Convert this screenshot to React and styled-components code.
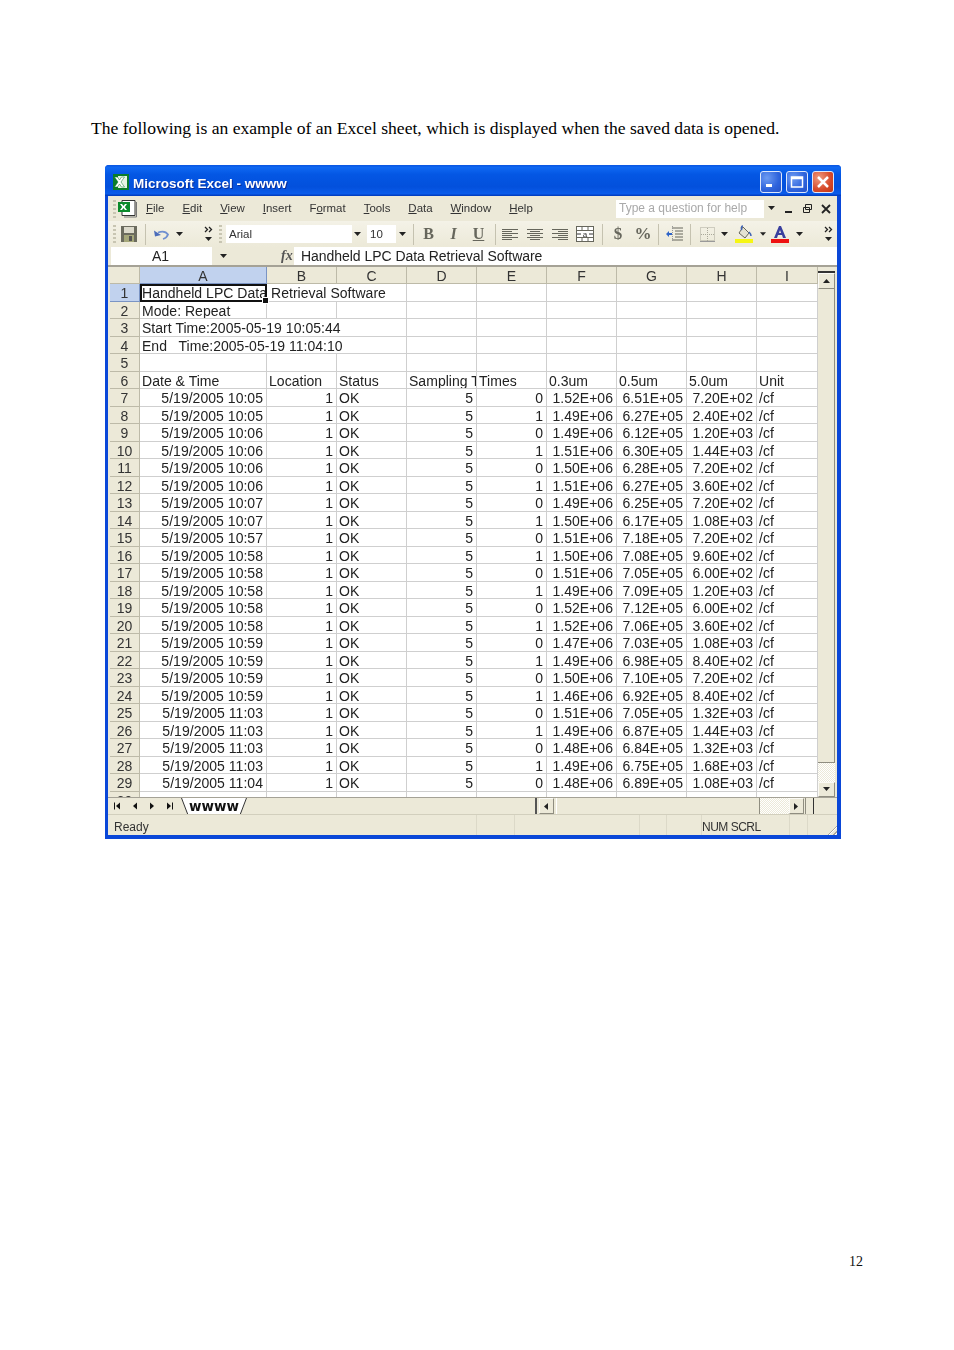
import styled, { createGlobalStyle } from 'styled-components';

const GlobalStyle = createGlobalStyle`
  html, body { margin: 0; padding: 0; background: #fff; }
`;

const Page = styled.div`
  width: 954px;
  height: 1350px;
  box-sizing: border-box;
  padding: 118px 91px 0;
  overflow: hidden;
`;

const Intro = styled.p`
  margin: 0;
  font: 17.6px/20px "Liberation Serif", serif;
  color: #000;
  white-space: nowrap;
`;

const PageNumber = styled.div`
  margin-top: 413px;
  text-align: right;
  font: 14px/20px "Liberation Serif", serif;
  color: #111;
`;

const Window = styled.div`
  width: 736px;
  height: 674px;
  margin: 27px 0 0 14px;
  box-sizing: border-box;
  display: flex;
  flex-direction: column;
  padding: 0 4px 4px 3px;
  background: #0a47d8;
  border-radius: 4px 4px 0 0;
  font-family: "Liberation Sans", Arial, sans-serif;
  color: #222;
  filter: blur(0.45px);
`;

const TitleBar = styled.div`
  height: 31px;
  flex: none;
  box-sizing: border-box;
  margin: 0 -4px 0 -3px;
  padding: 3px 7px 0 8px;
  display: flex;
  align-items: center;
  gap: 4px;
  border-radius: 4px 4px 0 0;
  background: linear-gradient(#0a55e0 0, #0f68f2 8%, #0457e4 30%, #0350dc 70%, #0a5bea 92%, #0038b8 100%);
`;

const TitleText = styled.span`
  flex: 1;
  margin-top: 2px;
  font: bold 13.5px "Liberation Sans", sans-serif;
  color: #fff;
  text-shadow: 1px 1px 0 #0b2f9c;
`;

const WinButton = styled.div`
  width: 22px;
  height: 22px;
  box-sizing: border-box;
  border: 1px solid #dfe8fb;
  border-radius: 3px;
  background: ${(p) => (p.$close
    ? 'radial-gradient(circle at 30% 30%, #ee9b80, #d6492a 60%, #c23512)'
    : 'radial-gradient(circle at 30% 30%, #6d9bf2, #2e63dc 60%, #2552c8)')};
  display: flex;
  align-items: center;
  justify-content: center;
`;

const MenuRow = styled.div`
  height: 25px;
  flex: none;
  padding: 0 6px 0 5px;
  display: flex;
  align-items: center;
  background: #ece9d8;
`;

const Grip = styled.div`
  width: 3px;
  height: 18px;
  flex: none;
  margin-right: ${(p) => p.$mr || 2}px;
  background: repeating-linear-gradient(#c8c5b2 0 2px, transparent 2px 4px);
`;

const MenuItems = styled.div`
  margin: -2px 0 0 8px;
  display: flex;
  gap: 18px;
  flex: 1;
  font-size: 11.45px;
  color: #333;
  u { text-decoration-thickness: 1px; text-underline-offset: 1px; }
`;

const HelpBox = styled.div`
  width: 162px;
  height: 18px;
  padding-left: 3px;
  box-sizing: border-box;
  display: flex;
  align-items: center;
  justify-content: space-between;
  background: #fff;
  font-size: 12px;
  color: #a9a9a9;
  margin-right: 6px;
`;

const HelpLabel = styled.span`
  margin-top: -2px;
`;

const HelpArrow = styled.div`
  width: 14px;
  height: 18px;
  background: #ece9d8;
  display: flex;
  align-items: center;
  justify-content: center;
`;

const DocControls = styled.div`
  width: 47px;
  display: flex;
  align-items: center;
  justify-content: space-between;
`;

const ToolRow = styled.div`
  height: 26px;
  flex: none;
  padding: 0 4px 0 5px;
  display: flex;
  align-items: center;
  background: linear-gradient(#f4f2e7, #ece9d8);
`;

const ToolSlot = styled.div`
  width: ${(p) => p.$w}px;
  box-sizing: border-box;
  padding-left: ${(p) => p.$pl || 0}px;
  margin-right: ${(p) => p.$mr || 0}px;
  flex: none;
  display: flex;
  align-items: center;
  justify-content: center;
`;

const TextTool = styled(ToolSlot)`
  font: bold ${(p) => p.$size || 16}px "Liberation Serif", serif;
  font-style: ${(p) => (p.$italic ? 'italic' : 'normal')};
  text-decoration: ${(p) => (p.$under ? 'underline' : 'none')};
  color: #66665c;
`;

const Sep = styled.div`
  width: 1px;
  height: 21px;
  margin: 0 ${(p) => p.$r}px 0 ${(p) => p.$l}px;
  flex: none;
  background: #c5c2b0;
`;

const FieldBox = styled.div`
  width: ${(p) => p.$w}px;
  height: 18px;
  flex: none;
  box-sizing: border-box;
  padding-left: 3px;
  background: #fff;
  font-size: 11.5px;
  line-height: 18px;
  color: #333;
`;

const FormulaRow = styled.div`
  height: 18px;
  flex: none;
  display: flex;
  align-items: stretch;
  background: #ece9d8;
  font-size: 14px;
  line-height: 18px;
`;

const NameBox = styled.div`
  width: 101px;
  margin-left: 3px;
  padding-right: 43px;
  box-sizing: border-box;
  background: #fff;
  text-align: right;
`;

const NameArrow = styled.div`
  width: 22px;
  display: flex;
  align-items: center;
  justify-content: center;
`;

const FxLabel = styled.div`
  width: 60px;
  box-sizing: border-box;
  padding-left: 47px;
  font: italic bold 14px/18px "Liberation Serif", serif;
  color: #555;
`;

const FormulaValue = styled.div`
  flex: 1;
  padding-left: 7px;
  background: #fff;
  letter-spacing: -0.04px;
`;

const SheetArea = styled.div`
  display: flex;
  height: 530px;
  flex: none;
  padding-left: 2px;
  background: #ece9d8;
  border-top: 2px solid #a5a296;
  overflow: hidden;
`;

const Grid = styled.div`
  width: 708px;
  flex: none;
  display: grid;
  grid-template-columns: 30px 127px repeat(7, 70px) 61px;
  grid-template-rows: 17px repeat(29, 17.5px) 6px;
  background: #fff;
  font-size: 14px;
  line-height: 18px;
  letter-spacing: 0.03px;
  overflow: hidden;
`;

const HeadCell = styled.div`
  box-sizing: border-box;
  overflow: hidden;
  text-align: center;
  background: ${(p) => (p.$active ? '#c1d2ee' : '#ece9d8')};
  border-right: 1px solid ${(p) => (p.$active ? '#7a94c4' : '#bdbaa8')};
  border-bottom: 1px solid ${(p) => (p.$active ? '#7a94c4' : '#bdbaa8')};
  color: #333;
`;

const Cell = styled.div`
  position: relative;
  box-sizing: border-box;
  padding: 0 3px 0 ${(p) => p.$pl || 2}px;
  grid-column: span ${(p) => p.$span || 1};
  text-align: ${(p) => p.$align || 'left'};
  white-space: pre;
  overflow: hidden;
  border-right: 1px solid #cfcfcf;
  border-bottom: 1px solid #cfcfcf;
`;

const SelectedCell = styled(Cell)`
  overflow: visible;
  border: 2px solid #111;
  padding: 0;
  line-height: 14px;
  z-index: 1;
  &::after {
    content: '';
    position: absolute;
    right: -4px;
    bottom: -4px;
    width: 5px;
    height: 5px;
    background: #111;
    border: 1px solid #fff;
  }
`;

const Clipped = styled.div`
  overflow: hidden;
`;

const VScroll = styled.div`
  width: 17px;
  flex: none;
  display: flex;
  flex-direction: column;
  background: repeating-conic-gradient(#ece9d8 0 25%, #fff 0 50%) 0 0 / 2px 2px;
`;

const SplitBar = styled.div`
  height: 4px;
  background: #ece9d8;
  border-bottom: 2px solid #333;
  flex: none;
`;

const ScrollBtn = styled.div`
  height: ${(p) => p.$h || 17}px;
  flex: none;
  box-sizing: border-box;
  display: flex;
  align-items: center;
  justify-content: center;
  background: #ece9d8;
  border: 1px solid #fbfaf5;
  border-right-color: #8f8d80;
  border-bottom-color: #8f8d80;
`;

const VThumb = styled.div`
  height: 474px;
  flex: none;
  box-sizing: border-box;
  background: #ece9d8;
  border-bottom: 1px solid #8f8d80;
  border-right: 1px solid #8f8d80;
`;

const VGap = styled.div`
  flex: 1;
`;

const TabRow = styled.div`
  height: 16px;
  flex: none;
  display: flex;
  align-items: stretch;
  background: #ece9d8;
  padding-left: 2px;
  border-top: 1px solid #a5a296;
`;

const TabNav = styled.div`
  width: 71px;
  padding-right: 4px;
  box-sizing: border-box;
  display: flex;
  align-items: center;
  justify-content: space-around;
  flex: none;
`;

const SheetTab = styled.div`
  position: relative;
  z-index: 0;
  width: 66px;
  flex: none;
  text-align: center;
  font: bold 13.5px/17px "DejaVu Sans", sans-serif;
  color: #111;
`;

const TabEdge = styled.svg`
  position: absolute;
  inset: 0;
  z-index: -1;
`;

const HSplit = styled.div`
  width: 2px;
  flex: none;
  margin: 0 2px 0 288px;
  background: #555;
`;

const HBtn = styled(ScrollBtn)`
  width: 15px;
  height: 16px;
`;

const HThumb = styled.div`
  width: 204px;
  flex: none;
  margin-left: 2px;
  box-sizing: border-box;
  background: #ece9d8;
  border-right: 1px solid #8f8d80;
  border-left: 1px solid #fff;
`;

const HGap = styled.div`
  width: 29px;
  flex: none;
  background: repeating-conic-gradient(#ece9d8 0 25%, #fff 0 50%) 0 0 / 2px 2px;
`;

const HEnd = styled.div`
  width: 7px;
  flex: none;
  margin-left: 1px;
  border-left: 1px solid #8f8d80;
  border-right: 1px solid #333;
`;

const StatusBar = styled.div`
  height: 20px;
  flex: none;
  display: flex;
  align-items: stretch;
  background: #ece9d8;
  border-top: 1px solid #d2cfbd;
  font-size: 12px;
  line-height: 25px;
  color: #333;
  position: relative;
`;

const StatusPane = styled.div`
  width: ${(p) => p.$w}px;
  flex: none;
  box-sizing: border-box;
  padding-left: ${(p) => p.$pl || 0}px;
  border-right: 1px solid #dcd9c8;
  letter-spacing: ${(p) => p.$ls || 0}px;
  white-space: nowrap;
`;

const ResizeGrip = styled.div`
  position: absolute;
  right: 0;
  bottom: 0;
  width: 12px;
  height: 12px;
  background: repeating-linear-gradient(135deg, transparent 0 2px, #aaa69a 2px 3px, #fff 3px 4px);
  clip-path: polygon(100% 0, 100% 100%, 0 100%);
`;

const Tri = ({ dir = 'down', size = 7, color = '#222' }) => {
  const pts = {
    down: '0,1 7,1 3.5,5',
    up: '0,5 7,5 3.5,1',
    left: '5,0 5,7 1,3.5',
    right: '1,0 1,7 5,3.5',
  }[dir];
  return (
    <svg width={size} height={size} viewBox="0 0 7 7">
      <polygon points={pts} fill={color} />
    </svg>
  );
};

const ExcelLogo = ({ size = 16 }) => (
  <svg width={size} height={size} viewBox="0 0 16 16">
    <rect x="0" y="0" width="16" height="16" fill="#0b7d2a" />
    <rect x="5" y="2" width="9" height="12" fill="#e7f3e5" />
    <path d="M1.500 3h3l2 3 2-3h3L8 8l3.500 5h-3l-2-3-2 3h-3L5 8z" fill="#fff" stroke="#0b7d2a" strokeWidth="0.500" />
  </svg>
);

const DocIcon = () => (
  <svg width="20" height="18" viewBox="0 0 20 18">
    <path d="M4 0.500h13v15H4z" fill="#fff" stroke="#333" />
    <path d="M18.500 2v15H6" fill="none" stroke="#777" />
    <rect x="0" y="2" width="12" height="10" fill="#0b8a2a" />
    <path d="M2 4h2l1.500 2L7 4h2L6.800 7 9 10H7L5.500 8 4 10H2l2.200-3z" fill="#fff" />
  </svg>
);

const SaveIcon = () => (
  <svg width="16" height="16" viewBox="0 0 16 16">
    <path d="M0 0h16v16H0z" fill="#6b6b5e" />
    <rect x="3" y="1" width="10" height="6" fill="#dcdacb" />
    <rect x="3" y="9" width="10" height="7" fill="#a5a77a" />
    <rect x="8" y="10" width="3" height="5" fill="#555" />
  </svg>
);

const UndoIcon = () => (
  <svg width="15" height="11" viewBox="0 0 15 11">
    <path d="M4 3.500c4-1.500 8-1 10 2-1 3-3 4-5 4.500" fill="none" stroke="#6f8fd0" strokeWidth="1.800" />
    <path d="M0 1.500l1 6 6-1.500z" fill="#4b6dba" />
  </svg>
);

const Chevrons = () => (
  <svg width="9" height="16" viewBox="0 0 9 16">
    <path d="M1 1l2.500 2.500L1 6M5 1l2.500 2.500L5 6" fill="none" stroke="#222" strokeWidth="1.300" />
    <polygon points="1,11 8,11 4.500,15" fill="#222" />
  </svg>
);

const AlignIcon = ({ mode }) => {
  const widths = [16, 10, 16, 10, 16, 10];
  const x = (w) => (mode === 'left' ? 0 : mode === 'center' ? (16 - w) / 2 : 16 - w);
  return (
    <svg width="16" height="13" viewBox="0 0 16 13">
      {widths.map((w, i) => (
        <rect key={i} x={x(w)} y={i * 2 + 1} width={w} height="1" fill="#66665c" />
      ))}
    </svg>
  );
};

const MergeIcon = () => (
  <svg width="18" height="16" viewBox="0 0 18 16">
    <rect x="0.500" y="0.500" width="17" height="15" fill="#fff" stroke="#66665c" />
    <path d="M0 4.500h18M0 11.500h18M6 0v4M12 0v4M6 12v4M12 12v4" stroke="#66665c" />
    <path d="M1 8h4M17 8h-4" stroke="#333" />
    <text x="9" y="10.500" fontSize="8" textAnchor="middle" fill="#333" fontFamily="Liberation Sans">a</text>
  </svg>
);

const IndentIcon = () => (
  <svg width="18" height="16" viewBox="0 0 18 16">
    <path d="M6 2h11M9 5h8M9 8h8M9 11h8M6 14h11" stroke="#66665c" />
    <path d="M6.500 0v16" stroke="#999" strokeDasharray="1 1" />
    <path d="M0 8l3-3v2h3v2H3v2z" fill="#2f64c8" />
  </svg>
);

const BorderIcon = () => (
  <svg width="15" height="15" viewBox="0 0 15 15">
    <rect x="0.500" y="0.500" width="14" height="13" fill="none" stroke="#aaa89a" strokeDasharray="1 1" />
    <path d="M7.500 1v13M1 7.500h13" stroke="#aaa89a" strokeDasharray="1 1" />
    <path d="M0 14.500h15" stroke="#999" />
  </svg>
);

const FillIcon = () => (
  <svg width="18" height="18" viewBox="0 0 18 18">
    <path d="M8 2l6 6-4 5-6-5z" fill="#e4e2d2" stroke="#66665c" />
    <path d="M8 1c-2 0-2 3-1 4" fill="none" stroke="#3f63b4" strokeWidth="1.500" />
    <path d="M14 7c1 1 2 2 2 4" fill="none" stroke="#3f63b4" strokeWidth="1.500" />
    <rect x="0" y="14" width="18" height="4" fill="#f6f614" />
  </svg>
);

const FontColorIcon = () => (
  <svg width="18" height="18" viewBox="0 0 18 18">
    <path d="M3 13L8 1h2l5 12h-3l-1-3H7l-1 3zM8 8h2L9 5z" fill="#3a3f9e" />
    <rect x="0" y="14" width="18" height="4" fill="#ee1111" />
  </svg>
);

const GLYPH = {
  min: <rect x="3" y="10" width="6" height="3" fill="#fff" />,
  max: <path d="M2.500 3h11v10h-11z M2.500 4.500h11" fill="none" stroke="#fff" strokeWidth="1.500" />,
  close: <path d="M3 3l10 10M13 3L3 13" stroke="#fff" strokeWidth="2.500" />,
};

const WinGlyph = ({ name }) => (
  <svg width="16" height="16" viewBox="0 0 16 16">{GLYPH[name]}</svg>
);

const TabNavIcon = ({ dir, bar }) => (
  <svg width="8" height="8" viewBox="0 0 8 8">
    <polygon points={dir === 'left' ? '6,0.500 6,7.500 2,4' : '2,0.500 2,7.500 6,4'} fill="#111" />
    {bar && <rect x={dir === 'left' ? 0 : 7} y="0.500" width="1" height="7" fill="#111" />}
  </svg>
);

const COLS = ['A', 'B', 'C', 'D', 'E', 'F', 'G', 'H', 'I'];

// time, e, f, g, h
const DATA = [
  ['10:05', 0, '1.52E+06', '6.51E+05', '7.20E+02'],
  ['10:05', 1, '1.49E+06', '6.27E+05', '2.40E+02'],
  ['10:06', 0, '1.49E+06', '6.12E+05', '1.20E+03'],
  ['10:06', 1, '1.51E+06', '6.30E+05', '1.44E+03'],
  ['10:06', 0, '1.50E+06', '6.28E+05', '7.20E+02'],
  ['10:06', 1, '1.51E+06', '6.27E+05', '3.60E+02'],
  ['10:07', 0, '1.49E+06', '6.25E+05', '7.20E+02'],
  ['10:07', 1, '1.50E+06', '6.17E+05', '1.08E+03'],
  ['10:57', 0, '1.51E+06', '7.18E+05', '7.20E+02'],
  ['10:58', 1, '1.50E+06', '7.08E+05', '9.60E+02'],
  ['10:58', 0, '1.51E+06', '7.05E+05', '6.00E+02'],
  ['10:58', 1, '1.49E+06', '7.09E+05', '1.20E+03'],
  ['10:58', 0, '1.52E+06', '7.12E+05', '6.00E+02'],
  ['10:58', 1, '1.52E+06', '7.06E+05', '3.60E+02'],
  ['10:59', 0, '1.47E+06', '7.03E+05', '1.08E+03'],
  ['10:59', 1, '1.49E+06', '6.98E+05', '8.40E+02'],
  ['10:59', 0, '1.50E+06', '7.10E+05', '7.20E+02'],
  ['10:59', 1, '1.46E+06', '6.92E+05', '8.40E+02'],
  ['11:03', 0, '1.51E+06', '7.05E+05', '1.32E+03'],
  ['11:03', 1, '1.49E+06', '6.87E+05', '1.44E+03'],
  ['11:03', 0, '1.48E+06', '6.84E+05', '1.32E+03'],
  ['11:03', 1, '1.49E+06', '6.75E+05', '1.68E+03'],
  ['11:04', 0, '1.48E+06', '6.89E+05', '1.08E+03'],
];

const blanks = (n) => Array.from({ length: n }, (_, i) => <Cell key={`b${i}`} />);

const Row = ({ n, d }) => (
  <>
    <HeadCell>{n}</HeadCell>
    <Cell $align="right">5/19/2005 {d[0]}</Cell>
    <Cell $align="right">1</Cell>
    <Cell>OK</Cell>
    <Cell $align="right">5</Cell>
    <Cell $align="right">{d[1]}</Cell>
    <Cell $align="right">{d[2]}</Cell>
    <Cell $align="right">{d[3]}</Cell>
    <Cell $align="right">{d[4]}</Cell>
    <Cell>/cf</Cell>
  </>
);

function SheetGrid() {
  return (
    <Grid>
      <HeadCell />
      {COLS.map((c) => <HeadCell key={c} $active={c === 'A'}>{c}</HeadCell>)}

      <HeadCell $active>1</HeadCell>
      <SelectedCell><Clipped>Handheld LPC Data</Clipped></SelectedCell>
      <Cell $span={2} $pl={4}>Retrieval Software</Cell>
      {blanks(6)}

      <HeadCell>2</HeadCell>
      <Cell>Mode: Repeat</Cell>
      {blanks(8)}

      <HeadCell>3</HeadCell>
      <Cell $span={3}>Start Time:2005-05-19 10:05:44</Cell>
      {blanks(6)}

      <HeadCell>4</HeadCell>
      <Cell $span={3}>End   Time:2005-05-19 11:04:10</Cell>
      {blanks(6)}

      <HeadCell>5</HeadCell>
      {blanks(9)}

      <HeadCell>6</HeadCell>
      <Cell>Date &amp; Time</Cell>
      <Cell>Location</Cell>
      <Cell>Status</Cell>
      <Cell>Sampling T</Cell>
      <Cell>Times</Cell>
      <Cell>0.3um</Cell>
      <Cell>0.5um</Cell>
      <Cell>5.0um</Cell>
      <Cell>Unit</Cell>

      {DATA.map((d, i) => (
        <Row key={i} n={i + 7} d={d} />
      ))}

      <HeadCell>30</HeadCell>
      {blanks(9)}
    </Grid>
  );
}

const MENU = [
  ['F', 'ile'], ['E', 'dit'], ['V', 'iew'], ['I', 'nsert'], ['', 'F', 'o', 'rmat'],
  ['T', 'ools'], ['D', 'ata'], ['W', 'indow'], ['H', 'elp'],
];

export default function App() {
  return (
    <>
      <GlobalStyle />
      <Page>
        <Intro>The following is an example of an Excel sheet, which is displayed when the saved data is opened.</Intro>

        <Window>
          <TitleBar>
            <ExcelLogo />
            <TitleText>Microsoft Excel - wwww</TitleText>
            <WinButton><WinGlyph name="min" /></WinButton>
            <WinButton><WinGlyph name="max" /></WinButton>
            <WinButton $close><WinGlyph name="close" /></WinButton>
          </TitleBar>

          <MenuRow>
            <Grip />
            <DocIcon />
            <MenuItems>
              {MENU.map((m) => (m.length === 2
                ? <span key={m[1]}><u>{m[0]}</u>{m[1]}</span>
                : <span key={m[3]}>{m[1]}<u>{m[2]}</u>{m[3]}</span>))}
            </MenuItems>
            <HelpBox>
              <HelpLabel>Type a question for help</HelpLabel>
              <HelpArrow><Tri /></HelpArrow>
            </HelpBox>
            <DocControls>
              <svg width="10" height="10" viewBox="0 0 10 10"><rect x="1" y="7" width="7" height="2" fill="#222" /></svg>
              <svg width="11" height="11" viewBox="0 0 11 11"><path d="M3.500 1.500h6v5h-6zM1.500 4.500h6v5h-6z" fill="#ece9d8" stroke="#222" /></svg>
              <svg width="10" height="10" viewBox="0 0 10 10"><path d="M1 1l8 8M9 1l-8 8" stroke="#222" strokeWidth="1.800" /></svg>
            </DocControls>
          </MenuRow>

          <ToolRow>
            <Grip />
            <ToolSlot $w={22}><SaveIcon /></ToolSlot>
            <Sep $l={5} $r={3} />
            <ToolSlot $w={24}><UndoIcon /></ToolSlot>
            <ToolSlot $w={12}><Tri /></ToolSlot>
            <ToolSlot $w={34} $pl={12}><Chevrons /></ToolSlot>
            <Grip $mr={4} />
            <FieldBox $w={126}>Arial</FieldBox>
            <ToolSlot $w={11} $mr={4}><Tri /></ToolSlot>
            <FieldBox $w={29}>10</FieldBox>
            <ToolSlot $w={12}><Tri /></ToolSlot>
            <Sep $l={5} $r={2} />
            <TextTool $w={25}>B</TextTool>
            <TextTool $w={25} $italic>I</TextTool>
            <TextTool $w={25} $under>U</TextTool>
            <Sep $l={4} $r={1} />
            <ToolSlot $w={25}><AlignIcon mode="left" /></ToolSlot>
            <ToolSlot $w={25}><AlignIcon mode="center" /></ToolSlot>
            <ToolSlot $w={25}><AlignIcon mode="right" /></ToolSlot>
            <ToolSlot $w={26}><MergeIcon /></ToolSlot>
            <Sep $l={4} $r={3} />
            <TextTool $w={24} $size={17}>$</TextTool>
            <TextTool $w={26} $size={17}>%</TextTool>
            <Sep $l={2} $r={4} />
            <ToolSlot $w={24}><IndentIcon /></ToolSlot>
            <Sep $l={3} $r={2} />
            <ToolSlot $w={28}><BorderIcon /></ToolSlot>
            <ToolSlot $w={7}><Tri /></ToolSlot>
            <ToolSlot $w={32}><FillIcon /></ToolSlot>
            <ToolSlot $w={6}><Tri /></ToolSlot>
            <ToolSlot $w={28}><FontColorIcon /></ToolSlot>
            <ToolSlot $w={10}><Tri /></ToolSlot>
            <ToolSlot $w={29} $pl={19}><Chevrons /></ToolSlot>
          </ToolRow>

          <FormulaRow>
            <NameBox>A1</NameBox>
            <NameArrow><Tri /></NameArrow>
            <FxLabel>fx</FxLabel>
            <FormulaValue>Handheld LPC Data Retrieval Software</FormulaValue>
          </FormulaRow>

          <SheetArea>
            <SheetGrid />
            <VScroll>
              <SplitBar />
              <ScrollBtn $h={16}><Tri dir="up" /></ScrollBtn>
              <VThumb />
              <VGap />
              <ScrollBtn $h={15}><Tri /></ScrollBtn>
            </VScroll>
          </SheetArea>

          <TabRow>
            <TabNav>
              <TabNavIcon dir="left" bar />
              <TabNavIcon dir="left" />
              <TabNavIcon dir="right" />
              <TabNavIcon dir="right" bar />
            </TabNav>
            <SheetTab>
              <TabEdge width="66" height="17" viewBox="0 0 66 17">
                <path d="M0 0h66l-7 17H7z" fill="#fff" />
                <path d="M0.500 0L7 17M65.500 0L59 17" stroke="#333" fill="none" />
              </TabEdge>
              wwww
            </SheetTab>
            <HSplit />
            <HBtn><Tri dir="left" /></HBtn>
            <HThumb />
            <HGap />
            <HBtn><Tri dir="right" /></HBtn>
            <HEnd />
          </TabRow>

          <StatusBar>
            <StatusPane $w={369} $pl={6}>Ready</StatusPane>
            <StatusPane $w={38} />
            <StatusPane $w={125} />
            <StatusPane $w={27} />
            <StatusPane $w={35} />
            <StatusPane $w={88} $ls={-0.5}>NUM SCRL</StatusPane>
            <StatusPane $w={18} />
            <ResizeGrip />
          </StatusBar>
        </Window>

        <PageNumber>12</PageNumber>
      </Page>
    </>
  );
}
